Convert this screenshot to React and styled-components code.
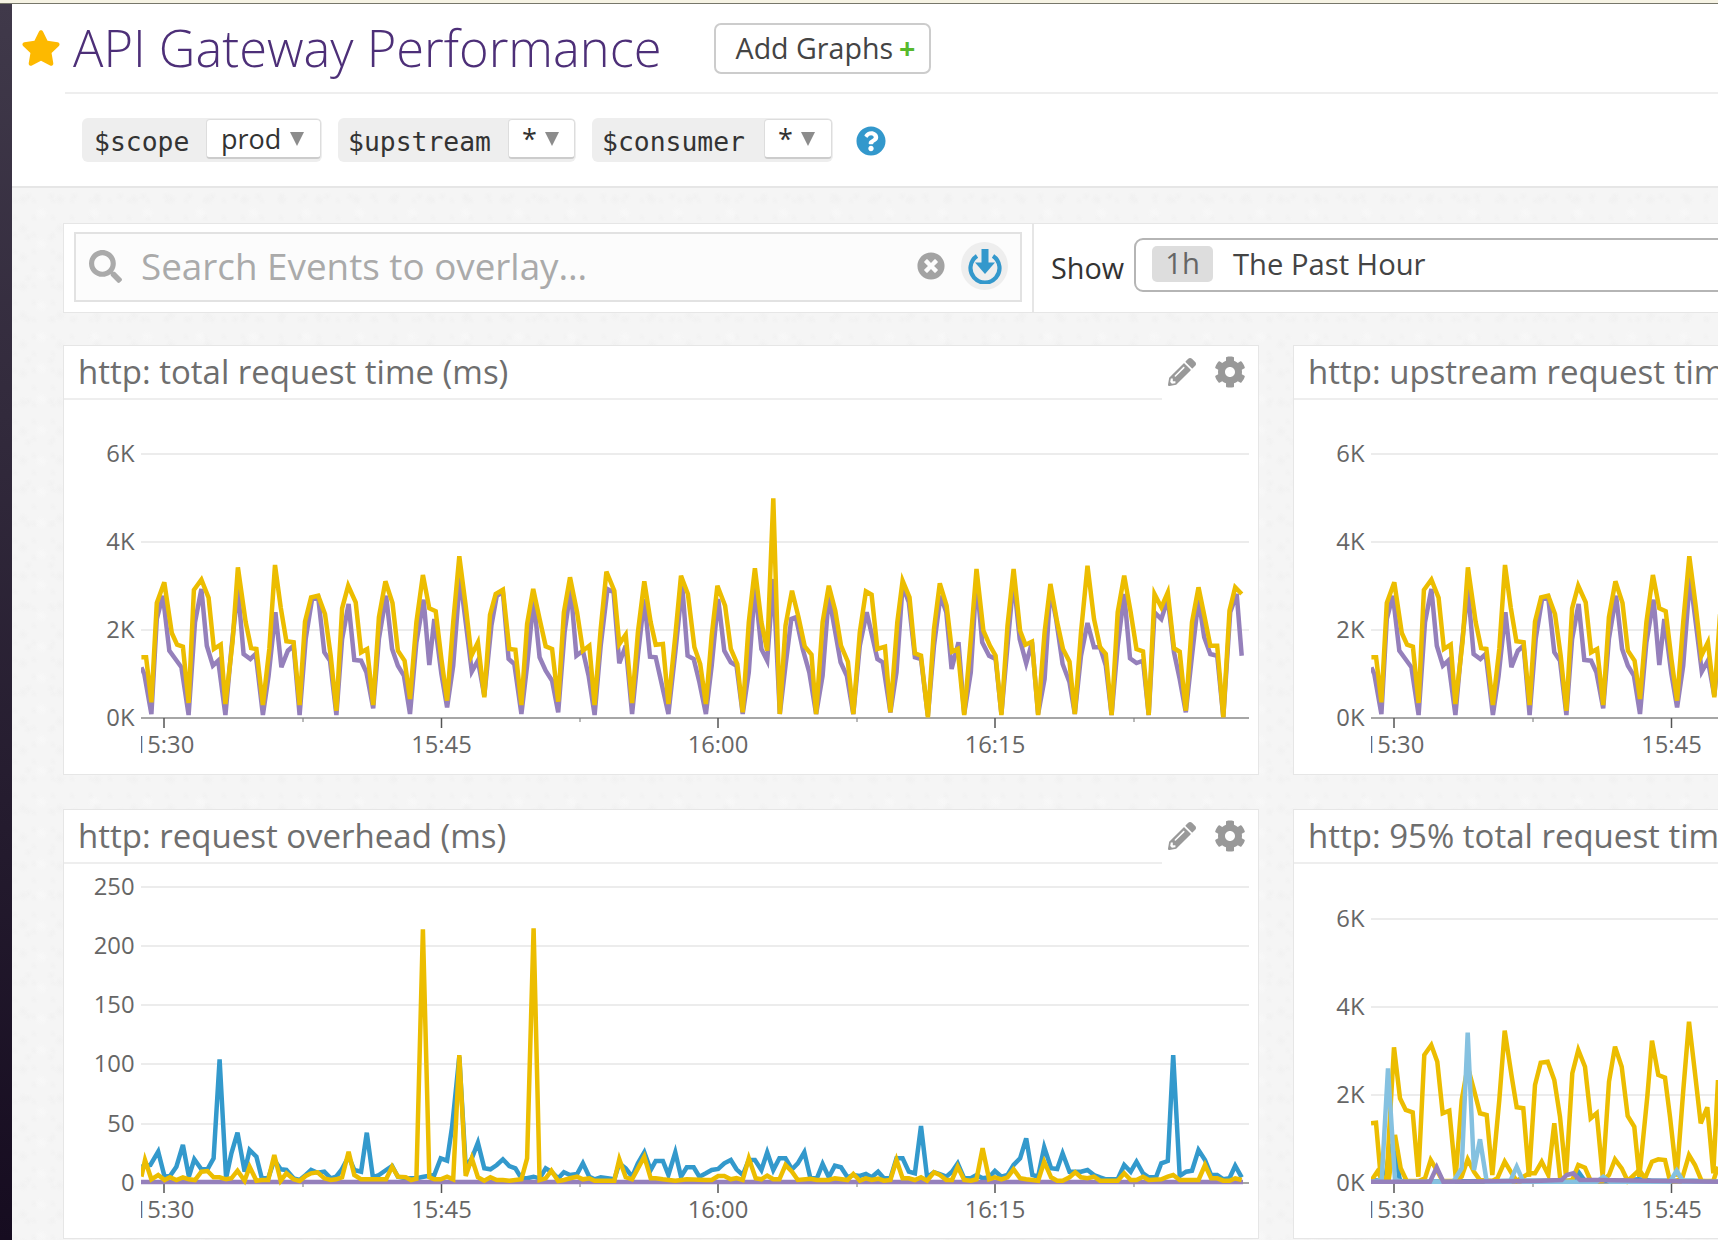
import React from "react";
import styled, { createGlobalStyle } from "styled-components";
import { FaStar, FaQuestionCircle, FaSearch, FaTimesCircle, FaPencilAlt, FaCog } from "react-icons/fa";

const GlobalStyle = createGlobalStyle`
  html, body { margin: 0; padding: 0; background: #fff; height: 1240px; overflow: hidden; }
  body { font-family: "Open Sans", "Liberation Sans", sans-serif; }
  * { box-sizing: border-box; }
`;

const Page = styled.div`display:flex;flex-direction:column;width:1718px;height:1240px;overflow:hidden;`;
const TopStrip = styled.div`height:4px;flex:none;background:#f6f3e4;border-bottom:1px solid #77776a;`;
const Body = styled.div`display:flex;flex:1;min-height:0;`;
const Sidebar = styled.div`width:12px;flex:none;background:linear-gradient(#40394a,#160c20);`;
const Main = styled.div`flex:1;min-width:0;display:flex;flex-direction:column;`;
const Header = styled.header`height:184px;flex:none;background:#fff;border-bottom:2px solid #e6e6e6;`;
const TitleRow = styled.div`height:88px;display:flex;align-items:center;padding-left:9px;margin-bottom:0;`;
const StarIcon = styled(FaStar)`width:40px;height:38px;color:#fdb900;flex:none;`;
const Title = styled.h1`margin:0 0 0 12px;font-size:50.6px;font-weight:300;color:#4d2f78;line-height:1;white-space:nowrap;width:641px;`;
const AddButton = styled.button`width:217px;height:51px;background:#fff;border:2px solid #ccc;border-radius:7px;font-family:inherit;font-size:28.6px;color:#444;padding:0 0 2px 6px;`;
const Plus = styled.span`color:#57b92c;font-weight:700;margin-left:6px;`;
const Rule = styled.div`height:2px;margin-left:53px;background:#eee;`;
const VarsRow = styled.div`display:flex;align-items:center;gap:16px;padding:24px 0 0 70px;`;
const Chip = styled.div`display:flex;align-items:center;justify-content:space-between;height:44px;width:${p=>p.$w}px;padding:0 1px 2px ${p=>p.$left}px;background:#eee;border-radius:6px;`;
const ChipLabel = styled.span`font-family:"DejaVu Sans Mono","Liberation Mono",monospace;font-size:26.4px;color:#333;margin-top:4px;`;
const ChipSelect = styled.div`display:flex;align-items:center;height:40px;width:${p=>p.$w}px;padding-left:${p=>p.$pad}px;gap:${p=>p.$gap}px;background:#fff;border:1px solid #ddd;border-bottom:2px solid #ccc;border-radius:4px;font-size:27px;color:#333;`;
const Caret = styled.span`width:0;height:0;border-left:7px solid transparent;border-right:7px solid transparent;border-top:14px solid #8c8c8c;`;
const HelpIcon = styled(FaQuestionCircle)`width:30px;height:30px;color:#3398cc;margin:2px 0 0 7px;`;
const Canvas = styled.main`
  flex:1;min-height:0;padding:35px 0 0 51px;overflow:hidden;
  background-color:#f5f5f5;
  background-image:
    radial-gradient(circle at 30% 40%, #f1f1f1 0, transparent 6px),
    radial-gradient(circle at 70% 20%, #f2f2f2 0, transparent 5px),
    radial-gradient(circle at 55% 80%, #f8f8f8 0, transparent 7px),
    radial-gradient(circle at 15% 75%, #f2f2f2 0, transparent 4px);
  background-size:37px 29px,23px 41px,53px 31px,19px 17px;
`;
const Toolbar = styled.section`display:flex;height:90px;width:1700px;background:#fff;border:1px solid #e6e6e6;`;
const SearchArea = styled.div`flex:none;width:970px;padding:8px 10px 9px 10px;border-right:2px solid #e6e6e6;`;
const SearchBox = styled.div`display:flex;align-items:center;height:70px;background:#fcfcfc;border:2px solid #e2e2e2;padding:0 0 2px 13px;`;
const SearchIcon = styled(FaSearch)`width:33px;height:33px;color:#aaa;flex:none;`;
const Placeholder = styled.span`flex:1;margin-left:19px;font-size:36.8px;color:#aaa;white-space:nowrap;`;
const ClearIcon = styled(FaTimesCircle)`width:28px;height:28px;color:#a3a3a3;flex:none;`;
const DownloadWrap = styled.span`width:47px;height:48px;margin:0 12px 0 16px;border-radius:50%;background:#eee;display:flex;align-items:center;justify-content:center;flex:none;`;
const ShowArea = styled.div`display:flex;align-items:center;flex:1;padding:0 0 7px 17px;`;
const ShowLabel = styled.span`font-size:28.8px;color:#333;margin-top:5px;width:83px;`;
const TimeSelect = styled.div`display:flex;align-items:center;flex:1;height:54px;background:#fff;border:2px solid #b5b5b5;border-radius:9px 0 0 9px;padding:0 0 2px 16px;font-size:29.2px;color:#444;`;
const TimePill = styled.span`width:61px;height:36px;border-radius:5px;background:#ddd;color:#666;text-align:center;line-height:35px;margin-right:20px;`;
const Grid = styled.div`display:grid;grid-template-columns:1196px 1196px;grid-auto-rows:430px;column-gap:34px;row-gap:34px;margin-top:32px;width:2426px;`;
const Panel = styled.article`background:#fff;border:1px solid #e6e6e6;display:flex;flex-direction:column;min-width:0;overflow:hidden;`;
const PanelHead = styled.div`display:flex;height:54px;flex:none;`;
const PanelTitle = styled.h2`flex:1;margin:0;padding:0 0 0 14px;font-size:33px;font-weight:400;line-height:52px;height:54px;color:#6e6e6e;border-bottom:2px solid #eee;white-space:nowrap;overflow:hidden;`;
const PanelTools = styled.div`display:flex;align-items:center;gap:18px;width:90px;padding:0 0 2px 6px;flex:none;`;
const ToolPencil = styled(FaPencilAlt)`width:28px;height:28px;color:#999;flex:none;`;
const ToolCog = styled(FaCog)`width:32px;height:32px;color:#999;flex:none;`;
const PanelTail = styled.div`width:6px;flex:none;`;
const ChartSvg = styled.svg`display:block;flex:none;`;
const AxisLabel = styled.text`font-family:"Open Sans","Liberation Sans",sans-serif;font-size:23.8px;fill:#666;`;

const conv = (s, ox, sx, oy = 480, sy = 3) =>
  s.trim().split(/\s+/).map(p => { const [x, y] = p.split(",").map(Number); return [ox + x / sx, oy + y / sy]; });
const join = (a, b, cut = 664) => [...a.filter(p => p[0] < cut), ...b.filter(p => p[0] >= cut)];
const pts = a => a.map(p => `${p[0].toFixed(1)},${p[1].toFixed(1)}`).join(" ");

const reqYellow = join(conv(`60,535 73,535 88,670 103,372 124,310 145,462 160,497 176,503 192,672 207,333 228,302 248,356 263,510 282,497 295,675 315,490 330,265 352,430 367,507 382,510 400,678 418,510 434,258 450,385 466,487 486,490 503,678 518,428 535,355 555,350 574,405 590,530 606,695 622,388 639,320 660,370 675,520 692,510 709,678 725,415 743,307 763,372 778,515 797,545 812,660 830,430 848,288 866,388 884,397 900,540 916,665 933,430 950,232 968,380 984,530 1002,490 1020,655 1036,408 1052,345 1072,332 1090,510 1107,512 1124,678 1140,435 1157,330 1175,420 1192,502 1210,510 1227,668 1243,400 1260,295 1280,400 1296,515 1314,500 1329,678 1346,450 1362,278 1384,335 1398,495 1416,467 1434,672 1450,460 1468,307 1486,430 1500,497 1520,495`,120,2.8),
  conv(`22,675 40,470 55,290 73,345 90,505 105,555 120,675 135,470 150,320 170,380 185,510 202,555 216,700 232,430 248,268 265,430 280,515 296,58 313,705 328,440 345,335 362,415 378,502 396,527 408,705 425,430 441,320 458,395 473,500 491,548 505,705 522,460 538,337 553,347 568,510 588,503 602,700 620,430 634,305 652,355 666,523 682,530 700,715 716,450 731,313 749,380 763,518 778,510 795,708 812,480 827,270 845,455 862,500 877,530 892,708 908,440 924,270 941,455 955,497 972,488 988,708 1005,460 1020,315 1038,430 1053,510 1070,548 1084,705 1100,460 1117,260 1134,420 1150,505 1165,525 1180,708 1196,400 1213,290 1230,400 1245,510 1262,517 1277,708 1292,345 1310,385 1327,340 1343,508 1358,518 1374,695 1390,430 1407,325 1424,420 1438,500 1456,500 1472,715 1488,395 1503,325 1520,345`,660,2.613));
const reqPurple = join(conv(`60,565 68,585 88,705 103,420 120,350 138,515 155,540 172,565 192,708 210,430 228,330 243,500 260,560 275,545 295,708 312,510 330,330 346,525 365,540 380,525 400,708 416,590 435,400 452,565 470,515 486,500 503,708 520,480 538,360 555,355 572,520 588,545 606,708 622,480 640,375 656,543 675,545 690,580 709,688 725,480 745,350 762,510 778,560 795,590 812,705 830,490 850,362 866,558 880,420 900,585 916,685 933,560 952,295 968,430 985,578 1002,545 1020,650 1040,440 1055,350 1072,340 1088,540 1104,555 1124,705 1140,560 1158,360 1175,535 1192,575 1210,605 1227,700 1245,460 1262,330 1278,530 1296,515 1312,590 1329,708 1346,500 1365,330 1382,340 1398,553 1416,500 1434,705 1450,530 1468,360 1484,533 1500,535 1518,620`,120,2.8),
  conv(`22,705 40,520 58,320 72,530 88,540 103,610 120,705 135,560 152,360 168,515 185,550 200,560 216,705 232,580 248,320 265,510 280,545 296,300 313,705 328,560 343,420 355,415 373,510 390,580 408,705 425,590 441,350 472,550 488,590 505,705 522,500 540,400 568,540 582,550 602,700 618,580 634,320 650,370 666,535 682,540 700,710 716,500 733,350 748,400 762,570 780,490 795,705 812,580 827,300 842,490 860,530 877,540 892,705 908,500 924,300 940,480 957,553 972,490 988,705 1005,600 1020,330 1035,420 1052,555 1070,610 1084,705 1100,530 1117,432 1134,505 1150,505 1165,560 1180,708 1196,500 1213,345 1228,538 1245,552 1262,545 1277,708 1292,400 1310,420 1327,360 1343,520 1358,600 1374,700 1390,530 1407,360 1422,475 1438,525 1456,530 1472,715 1490,400 1507,345 1520,530`,660,2.613));

const ovBlue = join(conv(`60,800 85,795 107,755 125,830 140,828 158,800 176,735 193,830 208,778 228,808 245,808 262,775 279,478 297,835 312,760 329,698 349,815 363,750 382,770 397,835 415,835 432,780 450,808 466,810 486,835 503,840 520,825 535,810 553,818 572,815 590,835 605,830 620,810 640,770 656,810 675,815 691,698 708,832 725,825 745,810 762,798 778,830 800,835 830,835 850,830 880,825 898,775 916,782 930,680 950,470 968,800 985,775 1002,728 1020,805 1037,808 1055,795 1072,778 1090,798 1107,805 1124,835 1140,835 1158,830 1175,835 1192,805 1208,815 1227,835 1243,817 1260,825 1280,822 1296,790 1314,830 1329,838 1346,832 1365,835 1384,838 1398,790 1416,805 1434,830 1450,790 1468,757 1486,810 1500,783 1520,783`,120,2.8,900),
  conv(`22,825 40,757 55,830 70,802 88,802 103,830 120,820 135,810 152,807 168,790 185,780 200,808 216,825 232,780 248,780 265,810 280,757 296,810 312,775 328,775 345,808 360,790 377,757 393,835 410,835 425,792 441,832 457,797 473,802 490,832 505,825 522,828 538,822 553,832 570,815 585,835 602,835 618,775 634,775 650,815 666,820 682,678 698,832 716,817 731,822 748,830 763,815 778,790 795,835 812,835 827,825 843,835 860,832 875,813 892,830 908,825 924,795 941,775 957,715 973,825 988,830 1004,742 1022,805 1038,807 1052,760 1070,815 1085,815 1100,815 1117,810 1134,825 1150,832 1165,838 1196,838 1213,795 1230,815 1245,785 1262,820 1277,832 1296,832 1310,790 1327,783 1341,465 1358,828 1375,815 1390,812 1407,750 1424,780 1440,825 1456,825 1472,838 1488,835 1503,797 1520,832`,660,2.613,900));
const ovYellow = join(conv(`60,830 70,780 88,838 107,825 125,840 140,832 158,840 176,832 193,838 210,840 228,815 245,813 262,832 279,832 297,838 312,835 329,812 349,842 363,800 382,842 397,840 415,840 432,765 450,842 466,820 486,838 503,843 520,828 535,820 553,817 572,835 590,840 605,838 622,832 640,755 656,825 675,838 691,838 708,838 725,838 745,838 762,800 778,830 800,832 815,840 830,836 848,88 866,832 880,838 898,838 916,830 933,838 950,465 968,828 985,775 1002,832 1020,842 1037,832 1055,840 1072,840 1090,842 1124,838 1140,775 1158,85 1175,840 1192,835 1208,812 1227,843 1243,840 1260,835 1280,830 1296,838 1314,835 1329,842 1346,842 1384,842 1398,778 1416,832 1434,838 1468,770 1486,835 1500,835 1520,838`,120,2.8,900),
  conv(`40,842 70,838 120,840 135,840 152,828 168,828 185,838 200,834 216,840 232,775 250,835 265,838 280,827 296,838 312,838 328,795 345,815 360,840 393,836 410,840 441,840 457,835 490,840 505,822 522,842 538,835 553,840 570,836 585,842 602,840 618,780 634,835 650,835 666,840 682,832 698,842 716,817 731,825 748,840 763,840 778,800 795,840 812,842 827,838 843,745 860,838 875,832 892,838 908,832 924,808 941,835 957,838 973,840 988,842 1004,785 1022,832 1038,842 1052,842 1070,832 1085,817 1100,832 1117,835 1134,830 1150,842 1196,842 1213,820 1230,840 1245,840 1262,830 1277,840 1310,838 1327,830 1341,825 1358,840 1407,840 1424,795 1440,835 1456,835 1472,842 1488,842 1503,835 1520,840`,660,2.613,900));
const ovPurple = [[141,1182],[1243,1182]];

const z9 = s => conv(s, 60, 3, 900);
const p95Y1 = z9(`243,670 258,668 272,830 290,835 296,720 312,442 330,595 347,630 368,637 385,830 403,465 424,435 442,485 458,640 478,632 497,830 515,600 533,500 552,570 570,640 590,645 607,825 628,600 644,392 665,530 680,622 700,625 717,830 735,555 752,488 773,485 793,540 810,650 828,830 847,520 865,450 885,500 902,655 920,640 938,830 957,545 975,440 995,500 1013,648 1033,680 1048,830 1072,590 1086,422 1105,525 1125,533 1140,650 1160,830 1180,570 1197,365 1215,520 1232,670 1252,622 1270,820 1284,540`);
const p95Y2 = z9(`243,843 262,815 280,843 296,840 315,705 332,805 350,843 385,843 405,835 422,780 440,810 458,843 497,843 515,830 533,778 552,815 570,840 607,843 622,835 644,785 665,820 680,843 717,820 735,820 755,785 775,825 793,670 810,830 828,843 847,840 865,795 885,803 902,843 938,843 957,825 975,778 995,805 1013,843 1048,810 1065,835 1086,785 1105,778 1125,780 1140,843 1160,843 1178,830 1197,765 1215,795 1235,843 1270,843 1284,800`);
const p95Light = z9(`243,845 275,840 294,505 315,840 340,845 425,845 440,845 490,845 515,805 533,398 552,810 570,718 590,845 660,845 680,800 700,845 920,845 940,830 960,845 1140,845 1160,812 1180,845 1284,845`);
const p95Dark = z9(`243,840 285,842 300,740 315,760 330,842 360,845 750,842 790,842 850,843 865,815 885,843 990,842 1045,838 1085,842 1210,842 1284,845`);
const p95Purple = z9(`243,845 420,845 440,802 460,845 730,843 815,840 830,825 850,820 870,840 920,840 1284,845`);

const YEL = "#ecbd00", PUR = "#9580bb", BLU = "#3399cc", LBL = "#85c1e0";
const reqSeries = [[reqPurple, PUR], [reqYellow, YEL]];
const ovSeries = [[ovBlue, BLU], [ovPurple, PUR], [ovYellow, YEL]];
const p95Series = [[p95Dark, BLU], [p95Y2, YEL], [p95Y1, YEL], [p95Light, LBL], [p95Purple, PUR]];

const K = [[455,"6K"],[543,"4K"],[631,"2K"],[719,"0K"]];
const K2 = [[919,"6K"],[1007,"4K"],[1095,"2K"],[1183,"0K"]];
const NUM = [[887,"250"],[946,"200"],[1005,"150"],[1064,"100"],[1124,"50"],[1183,"0"]];
const MAJOR = [[164,"15:30"],[441.5,"15:45"],[718,"16:00"],[995,"16:15"]];
const MINOR = [303,580,857,1134];

function Chart({ id, top, axis, rows, series }) {
  return (
    <ChartSvg width="1194" height="374" viewBox={`64 ${top} 1194 374`}>
      <defs>
        <clipPath id={id}><rect x="141" y={top} width="1108" height="374" /></clipPath>
      </defs>
      {rows.map(([y, t]) => (
        <g key={t}>
          <line x1="141" x2="1249" y1={y} y2={y} stroke={y === axis ? "#888" : "#ececec"} strokeWidth={y === axis ? 1.5 : 2} />
          <AxisLabel x="134.5" y={y + 8} textAnchor="end">{t}</AxisLabel>
        </g>
      ))}
      <g clipPath={`url(#${id})`}>
        {MAJOR.map(([x, t]) => (
          <g key={t}>
            <line x1={x} x2={x} y1={axis} y2={axis + 10} stroke="#555" strokeWidth="1.5" />
            <AxisLabel x={x} y={axis + 35} textAnchor="middle">{t}</AxisLabel>
          </g>
        ))}
        {MINOR.map(x => <line key={x} x1={x} x2={x} y1={axis} y2={axis + 4} stroke="#777" strokeWidth="1" />)}
        {series.map(([d, c], i) => <polyline key={i} points={pts(d)} fill="none" stroke={c} strokeWidth="4.5" />)}
      </g>
    </ChartSvg>
  );
}

function GraphPanel({ title, id, top, axis, rows, series }) {
  return (
    <Panel>
      <PanelHead>
        <PanelTitle>{title}</PanelTitle>
        <PanelTools><ToolPencil /><ToolCog /></PanelTools>
        <PanelTail />
      </PanelHead>
      <Chart id={id} top={top} axis={axis} rows={rows} series={series} />
    </Panel>
  );
}

const DownloadIcon = () => (
  <svg width="36" height="36" viewBox="0 0 36 36">
    <path d="M10 8 A14.5 14.5 0 1 0 26 8" fill="none" stroke="#3398cc" strokeWidth="4.2" />
    <rect x="14.5" y="1" width="7" height="14" fill="#3398cc" />
    <path d="M8 14.5 H28 L18 26 Z" fill="#3398cc" />
  </svg>
);

function Variable({ name, value, width, left, selectWidth, pad, gap }) {
  return (
    <Chip $w={width} $left={left}>
      <ChipLabel>{name}</ChipLabel>
      <ChipSelect $w={selectWidth} $pad={pad} $gap={gap}><span>{value}</span><Caret /></ChipSelect>
    </Chip>
  );
}

export default function App() {
  return (
    <Page>
      <GlobalStyle />
      <TopStrip />
      <Body>
        <Sidebar />
        <Main>
          <Header>
            <TitleRow>
              <StarIcon />
              <Title>API Gateway Performance</Title>
              <AddButton>Add Graphs<Plus>+</Plus></AddButton>
            </TitleRow>
            <Rule />
            <VarsRow>
              <Variable name="$scope" value="prod" width={240} left={12} selectWidth={115} pad={14} gap={9} />
              <Variable name="$upstream" value="*" width={238} left={10} selectWidth={67} pad={13} gap={8} />
              <Variable name="$consumer" value="*" width={241} left={10} selectWidth={68} pad={13} gap={8} />
              <HelpIcon />
            </VarsRow>
          </Header>
          <Canvas>
            <Toolbar>
              <SearchArea>
                <SearchBox>
                  <SearchIcon />
                  <Placeholder>Search Events to overlay…</Placeholder>
                  <ClearIcon />
                  <DownloadWrap><DownloadIcon /></DownloadWrap>
                </SearchBox>
              </SearchArea>
              <ShowArea>
                <ShowLabel>Show</ShowLabel>
                <TimeSelect><TimePill>1h</TimePill>The Past Hour</TimeSelect>
              </ShowArea>
            </Toolbar>
            <Grid>
              <GraphPanel title="http: total request time (ms)" id="c1" top={401} axis={719} rows={K} series={reqSeries} />
              <GraphPanel title="http: upstream request time (ms)" id="c2" top={401} axis={719} rows={K} series={reqSeries} />
              <GraphPanel title="http: request overhead (ms)" id="c3" top={864} axis={1183} rows={NUM} series={ovSeries} />
              <GraphPanel title="http: 95% total request time (ms)" id="c4" top={864} axis={1183} rows={K2} series={p95Series} />
            </Grid>
          </Canvas>
        </Main>
      </Body>
    </Page>
  );
}
